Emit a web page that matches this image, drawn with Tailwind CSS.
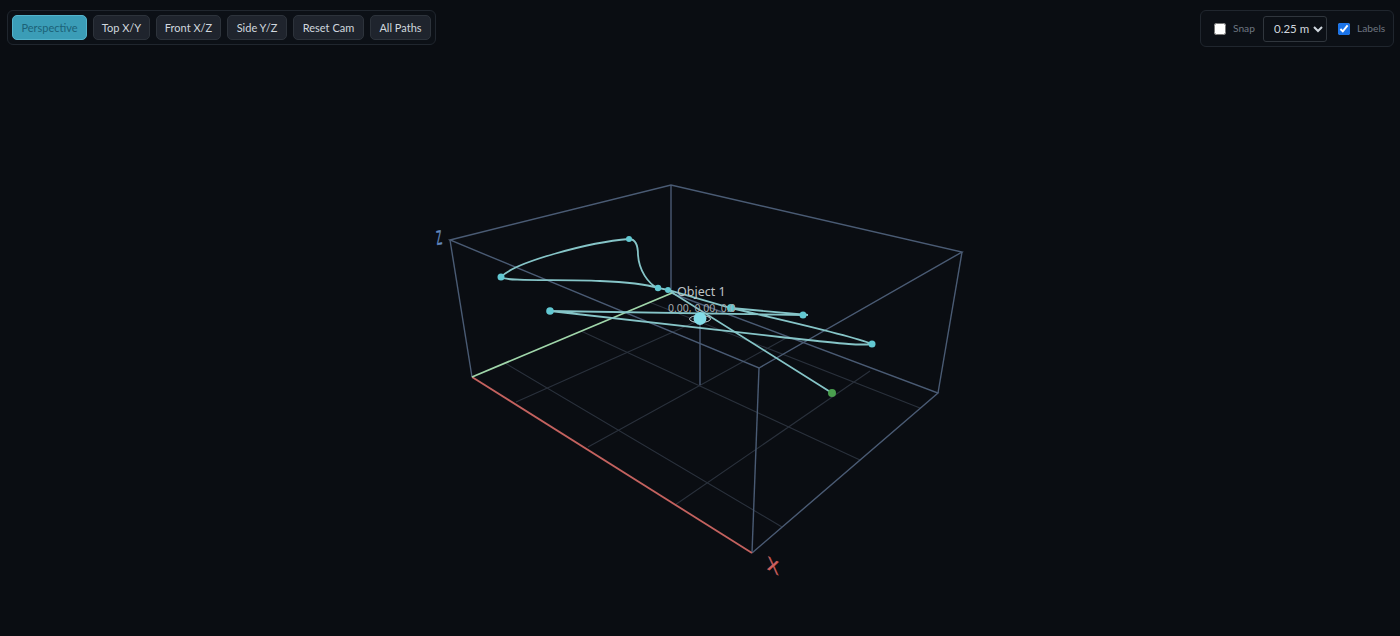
<!DOCTYPE html>
<html lang="en">
    <head>
        <meta charset="UTF-8" />
        <meta name="viewport" content="width=device-width, initial-scale=1.0" />
        <title>Path Viewer</title>
        <script src="https://cdn.jsdelivr.net/npm/@tailwindcss/browser@4"></script>
    </head>
    <body class="relative h-screen overflow-hidden bg-[#0a0d12] font-['Lato',sans-serif]">
        <!-- 3D scene -->
        <svg class="block w-full h-full" viewBox="0 0 1400 636" fill="none">
            <!-- floor grid -->
            <g stroke="#2a313c" stroke-width="1.1">
                <path d="M516 402L720 311" />
                <path d="M588 447L788 337" />
                <path d="M675 505L870 371" />
                <path d="M505 363L782 527" />
                <path d="M581 331L860 460" />
                <path d="M649 302L920 408" />
            </g>
            <!-- box -->
            <g stroke="#4a5b74" stroke-width="1.4">
                <path d="M450 240L671 185L962 252L759 368Z" />
                <path d="M450 240L472 377" />
                <path d="M671 185L671 293" />
                <path d="M962 252L938 393" />
                <path d="M759 368L752 553" />
                <path d="M752 553L938 393L671 293" />
                <path d="M700 318L700 385" />
            </g>
            <!-- axes -->
            <path d="M472 377L752 553" stroke="#c4625f" stroke-width="1.8" />
            <path d="M472 377L672 293" stroke="#a0d6aa" stroke-width="1.8" />
            <text transform="matrix(0.96 0.54 -0.04 1.05 767 569)" font-family="Liberation Sans, sans-serif" font-size="18" fill="#d0605f" stroke="#d0605f" stroke-width="0.4">X</text>
            <text transform="matrix(0.55 -0.1 0.12 1.25 437 245)" font-family="Liberation Sans, sans-serif" font-size="16" fill="#6288be" stroke="#6288be" stroke-width="0.4">Z</text>
            <!-- flight path -->
            <g stroke="#86c5c8" stroke-width="1.8">
                <path d="M832 393L668 290L658 288C648 284 639 270 638 255C638 245 636 239 629 239C590 242 515 262 501 277C505 282 560 279 600 281C625 282 645 284 658 288L668 290L731 308L808 315" />
                <path d="M731 308C790 322 850 335 872 344C855 346 830 342 780 337L550 311L803 315" />
            </g>
            <!-- waypoints -->
            <g fill="#62c8d2">
                <circle cx="629" cy="239" r="3" />
                <circle cx="501" cy="277" r="3.500" />
                <circle cx="658" cy="288" r="3.200" />
                <circle cx="668" cy="290" r="3" />
                <circle cx="731" cy="308" r="4" />
                <circle cx="803" cy="315" r="3.500" />
                <circle cx="872" cy="344" r="3.500" />
                <circle cx="550" cy="311" r="3.800" />
            </g>
            <circle cx="832" cy="393" r="4" fill="#4a9f4e" />
            <!-- object marker -->
            <ellipse cx="700" cy="319" rx="10.5" ry="3.6" stroke="#c8d4d8" stroke-width="1" />
            <circle cx="700" cy="318.500" r="6.4" fill="#83dde8" />
            <text x="677" y="296" font-size="12.500" fill="#bfc3c6" font-family="Noto Sans, sans-serif">Object 1</text>
            <text x="668" y="312" font-size="10.500" fill="#a4a9ad" font-family="Noto Sans, sans-serif">0.00, 0.00, 0.0</text>
        </svg>

        <!-- Camera toolbar -->
        <div class="absolute left-[7px] top-[10px] flex gap-[6px] rounded-md border border-[#20262e] bg-[#0c1016] p-[4px] text-[11px]">
            <button class="h-[25px] w-[75px] rounded-[5px] border border-[#54b3cb] bg-[#3b9db7] pt-[1px] text-[#1b6277]">Perspective</button>
            <button class="h-[25px] w-[57px] rounded-[5px] border border-[#2d333b] bg-[#1f242d] pt-[1px] text-[#d0d7de]">Top X/Y</button>
            <button class="h-[25px] w-[65px] rounded-[5px] border border-[#2d333b] bg-[#1f242d] pt-[1px] text-[#d0d7de]">Front X/Z</button>
            <button class="h-[25px] w-[60px] rounded-[5px] border border-[#2d333b] bg-[#1f242d] pt-[1px] text-[#d0d7de]">Side Y/Z</button>
            <button class="h-[25px] w-[71px] rounded-[5px] border border-[#2d333b] bg-[#1f242d] pt-[1px] text-[#d0d7de]">Reset Cam</button>
            <button class="h-[25px] w-[61px] rounded-[5px] border border-[#2d333b] bg-[#1f242d] pt-[1px] text-[#d0d7de]">All Paths</button>
        </div>

        <!-- Snap and label options -->
        <div class="absolute right-[6px] top-[10px] flex h-[37px] w-[194px] items-center rounded-md border border-[#20262e] bg-[#0c1016] pl-[13px] text-[10.2px] text-[#6e7681]">
            <input type="checkbox" class="mt-[1px] h-[12px] w-[12px] [color-scheme:light]" />
            <span class="ml-[7px] mt-[1px] w-[30px]">Snap</span>
            <select class="h-[26px] w-[64px] rounded-[3px] border border-[#30363d] bg-[#0c1016] pl-[6px] text-[11.5px] text-[#d0d7de] [color-scheme:dark]">
                <option>0.25 m</option>
            </select>
            <input type="checkbox" checked class="ml-[11px] mt-[1px] h-[12px] w-[12px] accent-[#1a73e8] [color-scheme:light]" />
            <span class="ml-[7px] mt-[1px]">Labels</span>
        </div>
    </body>
</html>
